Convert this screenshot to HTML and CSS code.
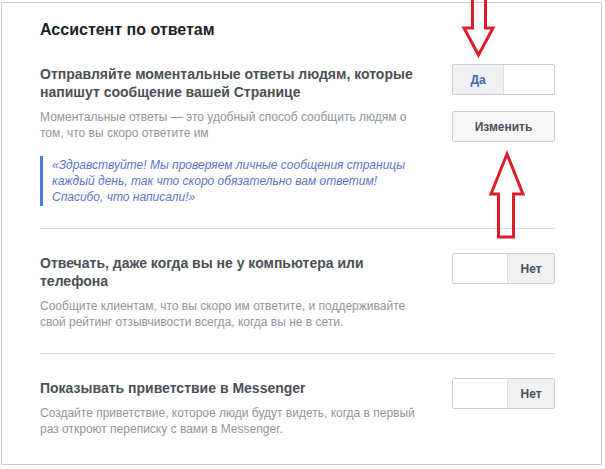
FILE: index.html
```html
<!DOCTYPE html>
<html lang="ru">
<head>
<meta charset="utf-8">
<link rel="stylesheet" href="styles.css">
</head>
<body>
<div class="card">
  <h2 class="title">Ассистент по ответам</h2>

  <div class="section">
    <div class="text">
      <div class="heading">Отправляйте моментальные ответы людям, которые напишут сообщение вашей Странице</div>
      <div class="desc">Моментальные ответы — это удобный способ сообщить людям о том, что вы скоро ответите им</div>
      <div class="quote">«Здравствуйте! Мы проверяем личные сообщения страницы каждый день, так что скоро обязательно вам ответим! Спасибо, что написали!»</div>
    </div>
    <div class="controls">
      <div class="toggle">
        <span class="half on yes">Да</span>
        <span class="half"></span>
      </div>
      <div class="button">Изменить</div>
    </div>
  </div>

  <div class="section">
    <div class="text">
      <div class="heading">Отвечать, даже когда вы не у компьютера или телефона</div>
      <div class="desc">Сообщите клиентам, что вы скоро им ответите, и поддерживайте свой рейтинг отзывчивости всегда, когда вы не в сети.</div>
    </div>
    <div class="controls">
      <div class="toggle">
        <span class="half wide"></span>
        <span class="half on no">Нет</span>
      </div>
    </div>
  </div>

  <div class="section">
    <div class="text">
      <div class="heading">Показывать приветствие в Messenger</div>
      <div class="desc">Создайте приветствие, которое люди будут видеть, когда в первый раз откроют переписку с вами в Messenger.</div>
    </div>
    <div class="controls">
      <div class="toggle">
        <span class="half wide"></span>
        <span class="half on no">Нет</span>
      </div>
    </div>
  </div>
</div>

<svg class="arrows" width="605" height="469" viewBox="0 0 605 469">
  <path d="M472.5 -2 V28 H464 L478.5 55 L493 28 H485.5 V-2" fill="none" stroke="#dc1f26" stroke-width="3" stroke-linejoin="miter"/>
  <path d="M498.5 237 V194 H491 L507 154 L523 194 H513.5 V237 Z" fill="none" stroke="#dc1f26" stroke-width="3" stroke-linejoin="miter"/>
</svg>
</body>
</html>
```

FILE: styles.css
```css
html, body {
  margin: 0;
  padding: 0;
  background: #ffffff;
}

body {
  font-family: "Liberation Sans", Arial, sans-serif;
  position: relative;
  width: 605px;
  height: 469px;
  overflow: hidden;
}

.card {
  box-sizing: border-box;
  margin: 2px 0 0 1px;
  width: 601px;
  height: 463px;
  border: 1px solid #cccccc;
  padding: 17px 46px 0 38px;
}

.title {
  margin: 0 0 24px 0;
  font-size: 16px;
  line-height: 20px;
  font-weight: bold;
  color: #1d2129;
}

.section {
  display: flex;
  justify-content: space-between;
  align-items: flex-start;
  padding-bottom: 22px;
  border-bottom: 1px solid #dddfe2;
}

.section + .section {
  padding-top: 24px;
  padding-bottom: 23px;
}

.section:last-child {
  border-bottom: none;
}

.text {
  width: 385px;
  padding-top: 1px;
}

.heading {
  font-size: 14px;
  line-height: 18px;
  font-weight: bold;
  color: #4b4f56;
}

.desc {
  margin-top: 8px;
  font-size: 12px;
  line-height: 16px;
  color: #90949c;
}

.quote {
  margin-top: 15px;
  border-left: 3px solid #4a7be0;
  padding: 1px 0 1px 9px;
  font-size: 12px;
  line-height: 16px;
  font-style: italic;
  color: #5b74c9;
}

.controls {
  display: flex;
  flex-direction: column;
  gap: 16px;
  width: 103px;
}

.toggle {
  box-sizing: border-box;
  display: flex;
  height: 31px;
  border: 1px solid #ccd0d5;
  border-radius: 2px;
  overflow: hidden;
  background: #ffffff;
}

.half {
  flex: 1;
  display: flex;
  align-items: center;
  justify-content: center;
  font-size: 12px;
  font-weight: bold;
}

.half.wide {
  flex: 0 0 54px;
}

.half.on {
  background: #f0f1f3;
}

.yes {
  color: #4267b2;
  border-right: 1px solid #dddfe2;
}

.no {
  color: #4b4f56;
  border-left: 1px solid #dddfe2;
}

.button {
  box-sizing: border-box;
  height: 31px;
  border: 1px solid #ccd0d5;
  border-radius: 2px;
  background: #f6f7f9;
  display: flex;
  align-items: center;
  justify-content: center;
  font-size: 12px;
  font-weight: bold;
  color: #4b4f56;
}

.arrows {
  position: absolute;
  left: 0;
  top: 0;
  pointer-events: none;
}
```
